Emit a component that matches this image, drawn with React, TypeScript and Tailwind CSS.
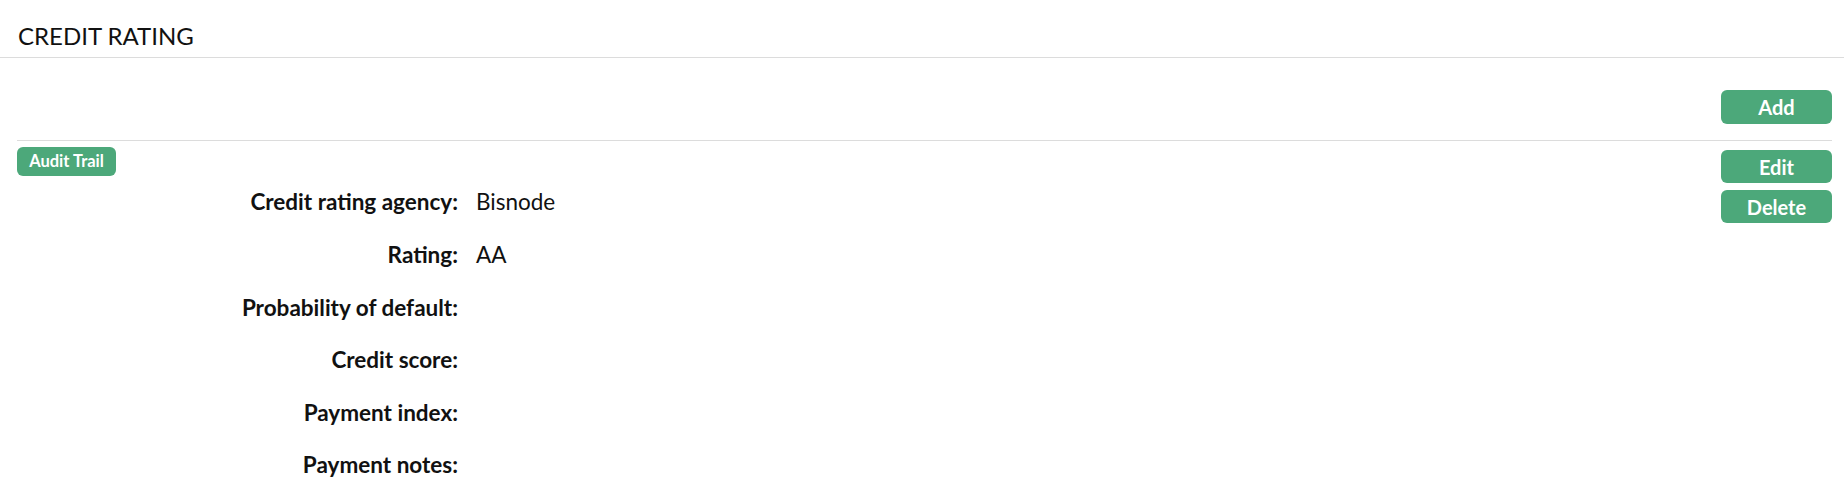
import React from "react";

const rows: { label: string; value: string }[] = [
  { label: "Credit rating agency:", value: "Bisnode" },
  { label: "Rating:", value: "AA" },
  { label: "Probability of default:", value: "" },
  { label: "Credit score:", value: "" },
  { label: "Payment index:", value: "" },
  { label: "Payment notes:", value: "" },
];

export default function App() {
  return (
    <div className="w-[1844px] h-[495px] bg-white text-[#111] font-['Lato',sans-serif]">
      <div className="h-[58px] border-b border-[#dcdcdc] pl-[18px] pt-[22px]">
        <h1 className="text-[24px] leading-[28px] font-normal">CREDIT RATING</h1>
      </div>
      <div className="pl-[17px] pr-[12px]">
        <div className="flex justify-end pt-[32px]">
          <button className="w-[111px] h-[34px] rounded-[6px] bg-[#4ca87a] text-white font-bold text-[20px] leading-none">
            Add
          </button>
        </div>
        <div className="mt-[16px] border-t border-[#dcdcdc]" />
        <div className="flex justify-between">
          <div className="flex flex-col">
            <div className="pt-[6px]">
              <span className="inline-flex items-center justify-center w-[99px] h-[29px] rounded-[6px] bg-[#4ca87a] text-white font-bold text-[16.5px]">
                Audit Trail
              </span>
            </div>
            <div className="grid grid-cols-[441px_auto] gap-x-[18px]">
              {rows.map((r) => (
                <React.Fragment key={r.label}>
                  <div className="h-[52.6px] flex items-center justify-end font-bold text-[22.5px]">
                    {r.label}
                  </div>
                  <div className="h-[52.6px] flex items-center text-[22.5px]">{r.value}</div>
                </React.Fragment>
              ))}
            </div>
          </div>
          <div className="flex flex-col gap-[7px] pt-[9px]">
            <button className="w-[111px] h-[33px] rounded-[6px] bg-[#4ca87a] text-white font-bold text-[20px] leading-none">
              Edit
            </button>
            <button className="w-[111px] h-[33px] rounded-[6px] bg-[#4ca87a] text-white font-bold text-[20px] leading-none">
              Delete
            </button>
          </div>
        </div>
      </div>
    </div>
  );
}
